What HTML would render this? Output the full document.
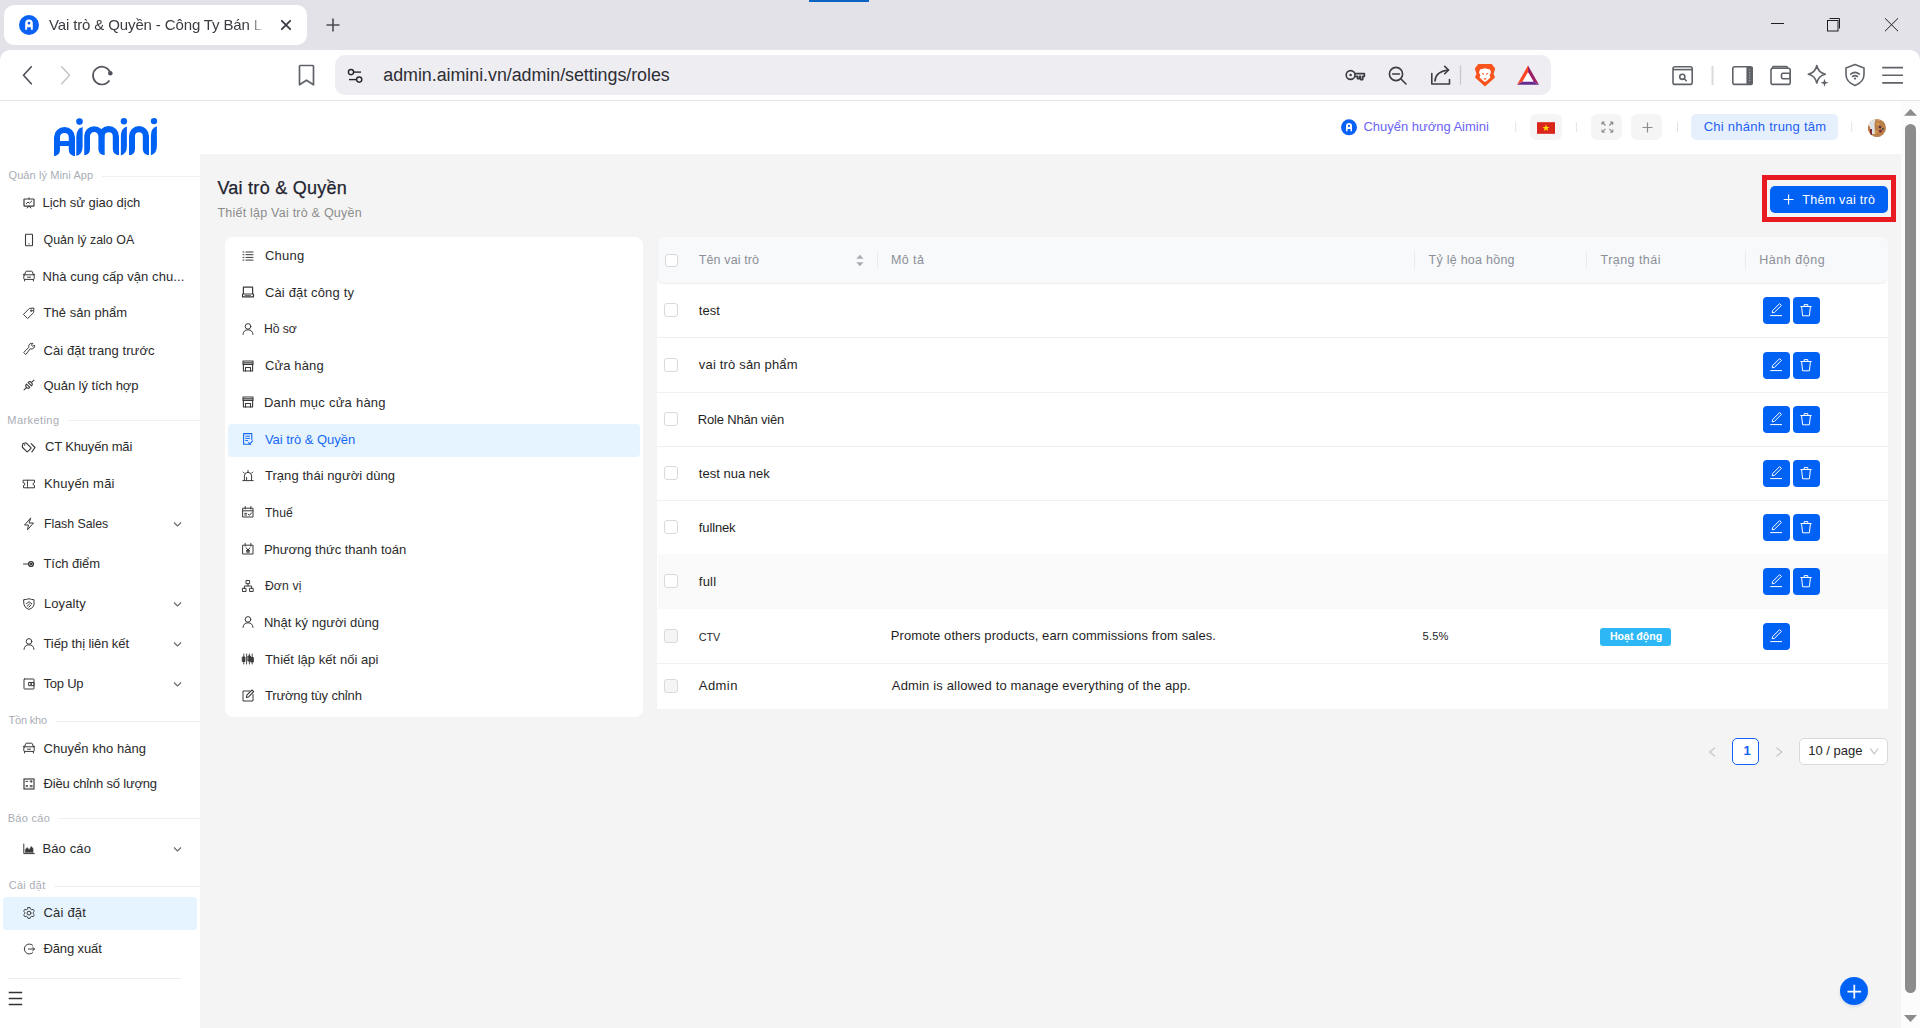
<!DOCTYPE html>
<html><head><meta charset="utf-8"><title>Vai trò &amp; Quyền</title>
<style>
*{box-sizing:border-box;margin:0;padding:0}
html,body{width:1920px;height:1028px;overflow:hidden;background:#e3e2e8;font-family:"Liberation Sans",sans-serif}
.a{position:absolute}
.t{position:absolute;white-space:nowrap;font-family:"Liberation Sans",sans-serif}
svg{position:absolute;overflow:visible}
</style></head><body>
<!-- tab strip -->
<div class="a" style="left:809px;top:0;width:60px;height:2px;background:#0b63c4"></div>
<div class="a" style="left:4px;top:5px;width:303px;height:40px;background:#fff;border-radius:10px"></div>
<svg style="left:0;top:0" width="1920" height="100" viewBox="0 0 1920 100">
 <!-- favicon -->
 <circle cx="29" cy="25" r="10" fill="#0a62f5"/>
 <path fill="#fff" fill-rule="evenodd" d="M25.2 29.8V23.3A3.8 3.8 0 0 1 32.8 23.3V29.8H30.9V27.2H27.1V29.8Z M29 21.8A1.4 1.4 0 1 0 29 24.6A1.4 1.4 0 1 0 29 21.8Z"/>
 <!-- tab close -->
 <path d="M281.8 20.8L290.2 29.2M290.2 20.8L281.8 29.2" stroke="#3c3c44" stroke-width="1.8" stroke-linecap="round"/>
 <path d="M333 18.5V31.5M326.5 25H339.5" stroke="#4b4b52" stroke-width="1.6"/>
 <!-- window controls -->
 <path d="M1771 23.5H1784" stroke="#1f1f1f" stroke-width="1"/>
 <rect x="1827.5" y="20.5" width="10.5" height="10.5" fill="none" stroke="#1f1f1f" stroke-width="1"/>
 <path d="M1829.5 18.5H1839.5V28.5" fill="none" stroke="#1f1f1f" stroke-width="1"/>
 <path d="M1885 18.3L1898 31.2M1898 18.3L1885 31.2" stroke="#1f1f1f" stroke-width="1"/>
</svg>
<!-- toolbar -->
<div class="a" style="left:0;top:50px;width:1920px;height:50px;background:#fff;border-radius:10px 10px 0 0"></div>
<div class="a" style="left:0;top:100px;width:1920px;height:1px;background:#e4e3e8"></div>
<div class="a" style="left:335px;top:55px;width:1216px;height:40px;background:#ededf2;border-radius:10px"></div>
<svg style="left:0;top:0" width="1920" height="100" viewBox="0 0 1920 100">
 <path d="M31.3 66.8L23.5 75.3L31.3 83.8" fill="none" stroke="#50535a" stroke-width="1.7" stroke-linecap="round" stroke-linejoin="round"/>
 <path d="M61.7 66.8L69.5 75.3L61.7 83.8" fill="none" stroke="#c4c4c8" stroke-width="1.5" stroke-linecap="round" stroke-linejoin="round"/>
 <path d="M109 81A8.9 8.9 0 1 1 109.8 71.5" fill="none" stroke="#50535a" stroke-width="1.7" stroke-linecap="round"/>
 <circle cx="110.3" cy="73.3" r="2.3" fill="#50535a"/>
 <path d="M300.3 65.5H312.7Q313.5 65.5 313.5 66.3V84.8L306.5 80.2L299.5 84.8V66.3Q299.5 65.5 300.3 65.5Z" fill="none" stroke="#5f6368" stroke-width="1.7" stroke-linejoin="round"/>
 <!-- tune -->
 <g fill="none" stroke="#27272b" stroke-width="1.4">
  <circle cx="351" cy="72.1" r="2.6"/><path d="M353.8 72.1H361"/>
  <circle cx="359.2" cy="79.6" r="2.6"/><path d="M349 79.6H356.4"/>
 </g>
 <!-- key -->
 <g fill="none" stroke="#3c3c44" stroke-width="1.6" stroke-linejoin="round">
  <circle cx="1350.6" cy="75" r="4.4"/>
  <path d="M1355 73.6H1364.4V76.4H1362.8V79.6H1360.6V76.4H1359.4V78.6H1357.4V76.4H1355"/>
 </g>
 <circle cx="1350.6" cy="75" r="1.3" fill="#3c3c44"/>
 <!-- zoom out -->
 <g fill="none" stroke="#3c3c44" stroke-width="1.6" stroke-linecap="round">
  <circle cx="1396" cy="74" r="6.6"/><path d="M1401 79L1406 84M1392.6 74H1399.4"/>
 </g>
 <!-- share -->
 <g fill="none" stroke="#3c3c44" stroke-width="1.6" stroke-linecap="round" stroke-linejoin="round">
  <path d="M1431.8 73.5V84H1449.5V79.5"/>
  <path d="M1435 81Q1435.5 71.5 1448.3 70"/>
  <path d="M1444.7 66.3L1448.6 70L1444.7 73.8"/>
 </g>
 <path d="M1460.5 65.5V84.8" stroke="#c9c9cd" stroke-width="1.3"/>
 <!-- brave -->
 <path d="M1478.3 64H1491.7L1495.2 68.6L1493.6 73.8L1495 77.6L1485 86.5L1475 77.6L1476.4 73.8L1474.8 68.6Z" fill="#f9531e"/>
 <path d="M1480 69.5L1485 68.3L1490 69.5L1491 72.5L1489.6 75.3L1490.5 77.2L1487.5 80.3L1485 82L1482.5 80.3L1479.5 77.2L1480.4 75.3L1479 72.5Z" fill="#fff"/>
 <path d="M1481.5 72.7L1484 73.7L1483.3 75.2ZM1488.5 72.7L1486 73.7L1486.7 75.2ZM1483.3 78.3H1486.7L1485 80Z" fill="#f9531e"/>
 <!-- BAT -->
 <path d="M1528 65.6L1517 84.7L1522.6 81.6L1528 72.2Z" fill="#ff4724"/>
 <path d="M1528 65.6L1539 84.7L1533.4 81.6L1528 72.2Z" fill="#9e1f63"/>
 <path d="M1517 84.7H1539L1533.4 81.6H1522.6Z" fill="#662d91"/>
 <path d="M1528 72.2L1522.6 81.6H1533.4Z" fill="#fff"/>
 <!-- right toolbar -->
 <g fill="none" stroke="#5f6368" stroke-width="1.6" stroke-linejoin="round">
  <rect x="1673" y="66.8" width="19.2" height="17.6" rx="2"/>
  <path d="M1673 69.6H1692.2"/>
  <circle cx="1682.3" cy="76.8" r="2.6"/><path d="M1684.3 78.8L1686.3 80.8" stroke-linecap="round"/>
  <rect x="1732.8" y="66.8" width="19.4" height="17.6" rx="2"/>
  <rect x="1771" y="68.3" width="19.2" height="16.1" rx="2"/>
  <path d="M1772.5 68.2V67.8Q1772.5 66.6 1773.7 66.6H1786.2Q1787.4 66.6 1787.6 68"/>
  <rect x="1781.5" y="73.2" width="8.7" height="5.6" rx="1.6"/>
  <path d="M1816.8 65.5Q1818.2 72.5 1825.3 74.2Q1818.2 75.9 1816.8 83Q1815.4 75.9 1808.3 74.2Q1815.4 72.5 1816.8 65.5Z"/>
  <path d="M1855 64.6L1864 67.9V74.6Q1864 82.2 1855 85.4Q1846 82.2 1846 74.6V67.9Z"/>
  <path d="M1850.7 74.1Q1855 70.6 1859.3 74.1M1852.6 76.5Q1855 74.7 1857.4 76.5" stroke-linecap="round"/>
  <path d="M1882.2 67.6H1903M1882.2 75.3H1903M1882.2 82.9H1903"/>
 </g>
 <path d="M1712.5 66V85" stroke="#dadade" stroke-width="2"/>
 <rect x="1746.4" y="66.8" width="6.6" height="17.6" fill="#5f6368" rx="1"/>
 <path d="M1749.7 69.5V82" stroke="#c8c9cc" stroke-width="0.9" stroke-dasharray="1 1.6"/>
 <path d="M1824.5 78.8L1825.5 81.8L1828.5 82.8L1825.5 83.8L1824.5 86.8L1823.5 83.8L1820.5 82.8L1823.5 81.8Z" fill="#5f6368"/>
 <circle cx="1855" cy="78.6" r="1.1" fill="#5f6368"/>
</svg>

<div class="a" style="left:0px;top:101px;width:1901px;height:927px;background:#fff;"></div>
<div class="a" style="left:200px;top:154px;width:1701px;height:874px;background:#f4f4f4;"></div>
<div class="a" style="left:1901px;top:101px;width:19px;height:927px;background:#fcfcfc;"></div>
<div class="a" style="left:1905px;top:124px;width:11px;height:869px;background:#8c8c8c;border-radius:5.5px"></div>
<svg style="left:1900px;top:100px" width="20" height="928" viewBox="1900 100 20 928"><path d="M1904 115.8H1917L1910.5 109Z" fill="#8c8c8c"/><path d="M1904 1015H1917L1910.5 1022Z" fill="#8c8c8c"/></svg>
<svg style="left:40px;top:110px" width="130" height="55" viewBox="40 110 130 55"><g fill="#0062f5">
<path fill-rule="evenodd" d="M54 156V137.5A10.5 10.5 0 0 1 75 137.5V156H73.8Q68.75 154.5 68.75 149.5V146.1H60V149.5Q60 154.5 55.2 156Z M60 141V137.2A4.38 4.38 0 0 1 68.75 137.2V141Z"/>
<path d="M82.6 127V146.5Q82.6 154.5 76.3 156V137Q76.3 128.5 82.6 127Z"/>
<path d="M126.9 126.5V146Q126.9 154 120.9 155.5V136.5Q120.9 128 126.9 126.5Z"/>
<path d="M156.9 126.3V145.8Q156.9 153.8 150.9 155.3V136.3Q150.9 127.8 156.9 126.3Z"/>
<circle cx="79.5" cy="121.6" r="3.3"/><circle cx="123.9" cy="121.3" r="3.2"/><circle cx="154" cy="121.1" r="3.2"/>
<path d="M84.25 136.1A9.95 9.95 0 0 1 104.15 136.1H98.4A4.2 4.2 0 0 0 90 136.1Z"/>
<path d="M98.4 136.4A10.3 10.3 0 0 1 119 136.4H112.8A4.05 4.05 0 0 0 104.7 136.4Z"/>
<path d="M84.25 136H90V149Q90 154 85.6 155H84.25Z"/>
<path d="M98.4 136H104.7V155H103.4Q98.4 154 98.4 149Z"/>
<path d="M112.8 136H119V155H117.7Q112.8 154 112.8 149Z"/>
<path d="M129 136.1A10 10 0 0 1 149 136.1H142.8A3.9 3.9 0 0 0 135 136.1Z"/>
<path d="M129 136H135V149Q135 154 130.6 155H129Z"/>
<path d="M142.8 136H149V155H147.7Q142.8 154 142.8 149Z"/>
</g></svg>
<svg style="left:1330px;top:105px" width="570" height="45" viewBox="1330 105 570 45"><circle cx="1349" cy="127.3" r="8" fill="#0a62f5"/><path fill="#fff" fill-rule="evenodd" d="M1346 131.2V126A3 3 0 0 1 1352 126V131.2H1350.5V129.1H1347.5V131.2Z M1349 124.8A1.1 1.1 0 1 0 1349 127A1.1 1.1 0 1 0 1349 124.8Z"/><path d="M1515.7 122V132M1576.4 122V132M1677.5 122V132M1851.7 122V132" stroke="#e3e3e3" stroke-width="1"/></svg>
<div class="a" style="left:1530px;top:114px;width:32px;height:26px;background:#f5f5f5;border-radius:6px"></div>
<div class="a" style="left:1591px;top:114px;width:31px;height:26px;background:#f5f5f5;border-radius:6px"></div>
<div class="a" style="left:1631px;top:114px;width:31px;height:26px;background:#f5f5f5;border-radius:6px"></div>
<div class="a" style="left:1691px;top:114px;width:147px;height:26px;background:#e6f0fd;border-radius:5px"></div>
<svg style="left:1530px;top:105px" width="370" height="45" viewBox="1530 105 370 45"><rect x="1537" y="122.2" width="18" height="11.6" fill="#da251d"/><path d="M1546 124.3L1546.85 126.9H1549.6L1547.4 128.5L1548.2 131.1L1546 129.5L1543.8 131.1L1544.6 128.5L1542.4 126.9H1545.15Z" fill="#ffde00"/><g fill="none" stroke="#8c8c8c" stroke-width="1.1"><path d="M1602 122L1605.5 125.5M1602 122H1604.8M1602 122V124.8"/><path d="M1612.8 122L1609.3 125.5M1612.8 122H1610M1612.8 122V124.8"/><path d="M1602 132.3L1605.5 128.8M1602 132.3H1604.8M1602 132.3V129.5"/><path d="M1612.8 132.3L1609.3 128.8M1612.8 132.3H1610M1612.8 132.3V129.5"/><path d="M1647.5 122.5V132.5M1642.5 127.5H1652.5" stroke-width="1.2"/></g><defs><clipPath id="avc"><circle cx="1877" cy="127.9" r="9"/></clipPath></defs><g clip-path="url(#avc)"><rect x="1867" y="118" width="20" height="20" fill="#b9804a"/><path d="M1869 119H1875.5L1874.5 124L1875 134H1869Z" fill="#dfe2e5"/><path d="M1867 126Q1869 125 1870 127V137H1867Z" fill="#c0703a"/><path d="M1870 129V136H1872V129Z" fill="#7a2a35"/><path d="M1867 134Q1877 140 1887 134V138H1867Z" fill="#23252b"/><circle cx="1880" cy="127" r="1.3" fill="#5a3040"/><circle cx="1880.5" cy="131" r="1.5" fill="#7a2a3a"/><circle cx="1883" cy="129" r="1" fill="#4a4050"/><path d="M1876 120L1879 118.5L1880 121Z" fill="#e0a070"/><circle cx="1878" cy="124" r="1.6" fill="#e0a050" opacity="0.8"/><circle cx="1876" cy="132" r="1.6" fill="#e0a050" opacity="0.8"/></g></svg>
<div class="a" style="left:102px;top:176px;width:98px;height:1px;background:#f0f0f0;"></div>
<div class="a" style="left:68px;top:420px;width:132px;height:1px;background:#f0f0f0;"></div>
<div class="a" style="left:56px;top:721px;width:144px;height:1px;background:#f0f0f0;"></div>
<div class="a" style="left:58px;top:818px;width:142px;height:1px;background:#f0f0f0;"></div>
<div class="a" style="left:54px;top:886px;width:146px;height:1px;background:#f0f0f0;"></div>
<div class="a" style="left:8px;top:978px;width:173px;height:1px;background:#ececec;"></div>
<svg style="left:0;top:985px" width="30" height="30" viewBox="0 985 30 30"><path d="M8.7 992.5H22.2M8.7 998.5H22.2M8.7 1004.5H22.2" stroke="#333" stroke-width="1.3"/></svg>
<div class="a" style="left:3px;top:897px;width:194px;height:33px;background:#e6f4ff;border-radius:4px"></div>
<svg style="left:21.8px;top:195.70000000000002px" width="14" height="14" viewBox="-7.0 -7.0 14 14"><g fill="none" stroke="#3a3a3a" stroke-width="1" stroke-linecap="round" stroke-linejoin="round"><rect x="-5" y="-4" width="10" height="7.2" rx="0.6" stroke-width="1.2"/><path d="M-2.8 0.8L-1 -1L0.5 0.2L2.8 -2"/><path d="M0 -4V-5.2M0 3.2L-2 5M0 3.2L2 5"/></g></svg>
<svg style="left:21.8px;top:232.70000000000002px" width="14" height="14" viewBox="-7.0 -7.0 14 14"><g fill="none" stroke="#3a3a3a" stroke-width="1" stroke-linecap="round" stroke-linejoin="round"><rect x="-3.5" y="-5.7" width="7" height="11.4" rx="0.8" stroke-width="1.1"/><path d="M-0.3 3.9H0.3" stroke-width="0.8"/></g></svg>
<svg style="left:21.8px;top:269.40000000000003px" width="14" height="14" viewBox="-7.0 -7.0 14 14"><g fill="none" stroke="#3a3a3a" stroke-width="1" stroke-linecap="round" stroke-linejoin="round"><path d="M-4.3 -1.2L-3.4 -4.2Q-3.2 -4.8 -2.6 -4.8H2.6Q3.2 -4.8 3.4 -4.2L4.3 -1.2"/><rect x="-5.2" y="-1.2" width="10.4" height="4.6" rx="0.7"/><path d="M-4.4 3.4V5M4.4 3.4V5M-5.6 -1.6H-4.8M4.8 -1.6H5.6M-1.5 1.2H1.5"/></g></svg>
<svg style="left:21.8px;top:306.2px" width="14" height="14" viewBox="-7.0 -7.0 14 14"><g fill="none" stroke="#3a3a3a" stroke-width="1" stroke-linecap="round" stroke-linejoin="round"><path d="M-5.3 1.1L0.4 -4.6L4.9 -4.9L4.6 -0.4L-1.1 5.3Z"/><circle cx="2.3" cy="-2.3" r="0.8"/></g></svg>
<svg style="left:21.8px;top:342.0px" width="14" height="14" viewBox="-7.0 -7.0 14 14"><g fill="none" stroke="#3a3a3a" stroke-width="1" stroke-linecap="round" stroke-linejoin="round"><path d="M-3.5 5.3L-5.3 3.5L-0.1 -1.7A3 3 0 0 1 3.9 -5.5L2.4 -4L3.9 -2.5L5.4 -4A3 3 0 0 1 1.6 -0.1Z" stroke-width="1"/></g></svg>
<svg style="left:21.8px;top:378.4px" width="14" height="14" viewBox="-7.0 -7.0 14 14"><g fill="none" stroke="#3a3a3a" stroke-width="1" stroke-linecap="round" stroke-linejoin="round"><g transform="rotate(-45)"><path d="M-1.1 -2.4V2.4A2.4 2.4 0 0 1 -1.1 -2.4Z M1.1 -2.4V2.4A2.4 2.4 0 0 0 1.1 -2.4Z M-3.5 0H-7 M3.5 0H7" stroke-width="1.05"/></g></g></svg>
<svg style="left:22.3px;top:439.8px" width="14" height="14" viewBox="-7.0 -7.0 14 14"><g fill="none" stroke="#3a3a3a" stroke-width="1" stroke-linecap="round" stroke-linejoin="round"><path d="M-6.2 -3.3L-3.6 -4.1Q-3 -4.3 -2.6 -3.9L1.9 0.6Q2.3 1 1.9 1.4L-1.4 4.7Q-1.8 5.1 -2.2 4.7L-6.4 0.5Q-6.8 0.1 -6.7 -0.5Z" stroke-width="1.15"/><circle cx="-4.3" cy="-2.1" r="0.75" fill="#3a3a3a" stroke="none"/><path d="M2.1 -3.4L6 0.5L2.9 4.8" stroke-width="1.15"/></g></svg>
<svg style="left:22.3px;top:476.6px" width="14" height="14" viewBox="-7.0 -7.0 14 14"><g fill="none" stroke="#3a3a3a" stroke-width="1" stroke-linecap="round" stroke-linejoin="round"><path d="M-5.5 -3.8H5.5V-1.3A1.4 1.4 0 0 0 5.5 1.5V3.8H-5.5V1.5A1.4 1.4 0 0 0 -5.5 -1.3Z"/><path d="M-1.5 -3.8V3.8" stroke-dasharray="1.2 1"/></g></svg>
<svg style="left:22.3px;top:516.5999999999999px" width="14" height="14" viewBox="-7.0 -7.0 14 14"><g fill="none" stroke="#3a3a3a" stroke-width="1" stroke-linecap="round" stroke-linejoin="round"><path d="M1.5 -5.8L-4.5 1H-0.5L-1.5 5.8L4.5 -1H0.5Z"/></g></svg>
<svg style="left:21.8px;top:556.6999999999999px" width="14" height="14" viewBox="-7.0 -7.0 14 14"><g fill="none" stroke="#3a3a3a" stroke-width="1" stroke-linecap="round" stroke-linejoin="round"><circle cx="2" cy="0" r="2.4" stroke-width="1.4"/><path d="M-5.5 0H-0.5"/><circle cx="2" cy="0" r="0.9" fill="#3a3a3a"/></g></svg>
<svg style="left:22.3px;top:597.1999999999999px" width="14" height="14" viewBox="-7.0 -7.0 14 14"><g fill="none" stroke="#3a3a3a" stroke-width="1" stroke-linecap="round" stroke-linejoin="round"><path d="M-5 -4.3Q-2.5 -4.3 0 -5.3Q2.5 -4.3 5 -4.3V0.8Q4.5 4 0 5.5Q-4.5 4 -5 0.8Z"/><path d="M-2.6 -0.3L0.2 -2.3L2.8 -0.2M-1.8 2.2L0.6 -0.1M-0.2 3.2L2 1"/></g></svg>
<svg style="left:21.8px;top:636.8px" width="14" height="14" viewBox="-7.0 -7.0 14 14"><g fill="none" stroke="#3a3a3a" stroke-width="1" stroke-linecap="round" stroke-linejoin="round"><circle cx="0" cy="-2.6" r="2.8"/><path d="M-5 5.4Q-4.6 0.8 0 0.8Q4.6 0.8 5 5.4"/></g></svg>
<svg style="left:21.8px;top:676.8px" width="14" height="14" viewBox="-7.0 -7.0 14 14"><g fill="none" stroke="#3a3a3a" stroke-width="1" stroke-linecap="round" stroke-linejoin="round"><rect x="-5" y="-5" width="10" height="10" rx="0.5"/><path d="M0 -1.5H5V1.7H0Z"/><circle cx="2" cy="0.1" r="0.5" fill="#3a3a3a"/></g></svg>
<svg style="left:21.8px;top:741.3px" width="14" height="14" viewBox="-7.0 -7.0 14 14"><g fill="none" stroke="#3a3a3a" stroke-width="1" stroke-linecap="round" stroke-linejoin="round"><path d="M-4.3 -1.2L-3.4 -4.2Q-3.2 -4.8 -2.6 -4.8H2.6Q3.2 -4.8 3.4 -4.2L4.3 -1.2"/><rect x="-5.2" y="-1.2" width="10.4" height="4.6" rx="0.7"/><path d="M-4.4 3.4V5M4.4 3.4V5M-5.6 -1.6H-4.8M4.8 -1.6H5.6M-1.5 1.2H1.5"/></g></svg>
<svg style="left:21.8px;top:776.8px" width="14" height="14" viewBox="-7.0 -7.0 14 14"><g fill="none" stroke="#3a3a3a" stroke-width="1" stroke-linecap="round" stroke-linejoin="round"><rect x="-5" y="-5" width="10" height="10" stroke-width="1.15" stroke-linejoin="miter"/><path d="M-3.2 -2.6H-1.2M2.2 -3.6V-1.6M1.2 -2.6H3.2M-3 1.3L-1.4 2.9M-1.4 1.3L-3 2.9M1.2 1.6H3.2M1.2 2.8H3.2" stroke-width="0.9"/></g></svg>
<svg style="left:21.8px;top:841.6999999999999px" width="14" height="14" viewBox="-7.0 -7.0 14 14"><g fill="none" stroke="#3a3a3a" stroke-width="1" stroke-linecap="round" stroke-linejoin="round"><path d="M-5.2 -5V4.6H5.4"/><path d="M-3.6 3.6V0.5L-1.8 -1.5L0.2 1L2.2 -2.5L4 -0.5V3.6Z" fill="#3a3a3a" stroke-width="0.6"/></g></svg>
<svg style="left:21.8px;top:905.9px" width="14" height="14" viewBox="-7.0 -7.0 14 14"><g fill="none" stroke="#3a3a3a" stroke-width="1" stroke-linecap="round" stroke-linejoin="round"><path d="M-1.2 -5.5H1.2L1.6 -3.9L3 -3.1L4.6 -3.6L5.8 -1.5L4.6 -0.4V1.2L5.8 2.3L4.6 4.4L3 3.9L1.6 4.7L1.2 6.2H-1.2L-1.6 4.7L-3 3.9L-4.6 4.4L-5.8 2.3L-4.6 1.2V-0.4L-5.8 -1.5L-4.6 -3.6L-3 -3.1L-1.6 -3.9Z" transform="translate(0 -0.35) scale(0.92)"/><circle cx="0" cy="0.1" r="1.9"/></g></svg>
<svg style="left:21.8px;top:942.0999999999999px" width="14" height="14" viewBox="-7.0 -7.0 14 14"><g fill="none" stroke="#3a3a3a" stroke-width="1" stroke-linecap="round" stroke-linejoin="round"><path d="M3.6 -3.8A5 5 0 1 0 3.6 3.8"/><path d="M-0.5 0H5.5M3.6 -1.8L5.5 0L3.6 1.8"/></g></svg>
<svg style="left:170px;top:517.8px" width="14" height="12" viewBox="0 0 14 12"><path d="M4 4.5L7.5 8L11 4.5" fill="none" stroke="#666" stroke-width="1.1"/></svg>
<svg style="left:170px;top:598.4px" width="14" height="12" viewBox="0 0 14 12"><path d="M4 4.5L7.5 8L11 4.5" fill="none" stroke="#666" stroke-width="1.1"/></svg>
<svg style="left:170px;top:638px" width="14" height="12" viewBox="0 0 14 12"><path d="M4 4.5L7.5 8L11 4.5" fill="none" stroke="#666" stroke-width="1.1"/></svg>
<svg style="left:170px;top:678px" width="14" height="12" viewBox="0 0 14 12"><path d="M4 4.5L7.5 8L11 4.5" fill="none" stroke="#666" stroke-width="1.1"/></svg>
<svg style="left:170px;top:842.9px" width="14" height="12" viewBox="0 0 14 12"><path d="M4 4.5L7.5 8L11 4.5" fill="none" stroke="#666" stroke-width="1.1"/></svg>
<div class="a" style="left:225px;top:237px;width:418px;height:480px;background:#fff;border-radius:8px"></div>
<div class="a" style="left:228px;top:424px;width:412px;height:33px;background:#e6f4ff;border-radius:4px"></div>
<svg style="left:241.0px;top:248.50000000000003px" width="14" height="14" viewBox="-7.0 -7.0 14 14"><g fill="none" stroke="#3a3a3a" stroke-width="1" stroke-linecap="round" stroke-linejoin="round"><path d="M-2 -4H5M-2 -1.3H5M-2 1.4H5M-2 4.1H5" stroke-width="1"/><path d="M-5 -4H-4M-5 -1.3H-4M-5 1.4H-4M-5 4.1H-4" stroke-width="1"/></g></svg>
<svg style="left:241.0px;top:285.17px" width="14" height="14" viewBox="-7.0 -7.0 14 14"><g fill="none" stroke="#3a3a3a" stroke-width="1" stroke-linecap="round" stroke-linejoin="round"><rect x="-4.6" y="-4.8" width="9.2" height="6.8" stroke-width="1.2"/><path d="M-5.5 2.2V4.8H5.5V2.2" stroke-width="1.2"/><path d="M-3 3.6H3" stroke-width="0.8" stroke-dasharray="1.5 0.5"/></g></svg>
<svg style="left:241.0px;top:321.84000000000003px" width="14" height="14" viewBox="-7.0 -7.0 14 14"><g fill="none" stroke="#3a3a3a" stroke-width="1" stroke-linecap="round" stroke-linejoin="round"><circle cx="0" cy="-2.6" r="2.8"/><path d="M-5 5.4Q-4.6 0.8 0 0.8Q4.6 0.8 5 5.4"/></g></svg>
<svg style="left:241.0px;top:358.51px" width="14" height="14" viewBox="-7.0 -7.0 14 14"><g fill="none" stroke="#3a3a3a" stroke-width="1" stroke-linecap="round" stroke-linejoin="round"><path d="M-5 -5H5V-1.6H-5Z M-5 -3.2H5" stroke-width="1.1"/><path d="M-4.6 -1.6V5H4.6V-1.6" stroke-width="1.1"/><path d="M-2.5 5V1.5H2.5V5" stroke-width="1.1"/></g></svg>
<svg style="left:241.0px;top:395.18px" width="14" height="14" viewBox="-7.0 -7.0 14 14"><g fill="none" stroke="#3a3a3a" stroke-width="1" stroke-linecap="round" stroke-linejoin="round"><path d="M-5 -5H5V-1.6H-5Z M-5 -3.2H5" stroke-width="1.1"/><path d="M-4.6 -1.6V5H4.6V-1.6" stroke-width="1.1"/><path d="M-2.5 5V1.5H2.5V5" stroke-width="1.1"/></g></svg>
<svg style="left:241.0px;top:431.85px" width="14" height="14" viewBox="-7.0 -7.0 14 14"><g fill="none" stroke="#1668f5" stroke-width="1" stroke-linecap="round" stroke-linejoin="round"><path d="M2.8 5.2H-4.4V-5.4H3.8V0.6" stroke-width="1.1"/><path d="M-2.4 -2.8H1.6M-2.4 -0.6H1.6M-2.4 1.6H-0.2" stroke-width="1"/><path d="M0.6 3.6L1.8 4.8L4.6 1.8" stroke-width="1.1"/></g></svg>
<svg style="left:241.0px;top:468.52px" width="14" height="14" viewBox="-7.0 -7.0 14 14"><g fill="none" stroke="#3a3a3a" stroke-width="1" stroke-linecap="round" stroke-linejoin="round"><path d="M-3.6 4.2V0Q-3.6 -3.6 0 -3.6Q3.6 -3.6 3.6 0V4.2"/><path d="M-5.2 4.6H5.2M0 -3.6V-5.5M-4.8 -4L-3.6 -2.8M4.8 -4L3.6 -2.8M-1.4 4.2V1.4"/></g></svg>
<svg style="left:241.0px;top:505.18999999999994px" width="14" height="14" viewBox="-7.0 -7.0 14 14"><g fill="none" stroke="#3a3a3a" stroke-width="1" stroke-linecap="round" stroke-linejoin="round"><rect x="-5" y="-3.8" width="10" height="8.8"/><path d="M-5 -1.2H5M-2.8 -5.5V-3M2.8 -5.5V-3M-3.3 1.4H-1.5M-3.3 3H-1.5M0.2 2.2L1.4 3.3L3.6 0.8"/></g></svg>
<svg style="left:241.0px;top:541.86px" width="14" height="14" viewBox="-7.0 -7.0 14 14"><g fill="none" stroke="#3a3a3a" stroke-width="1" stroke-linecap="round" stroke-linejoin="round"><rect x="-5" y="-3.8" width="10" height="8.8"/><path d="M-2.8 -5.5V-3M2.8 -5.5V-3M-1.8 -1.2L0 1.2L1.8 -1.2M0 1.2V3.8M-1.6 1.6H1.6M-1.6 2.9H1.6"/></g></svg>
<svg style="left:241.0px;top:578.5300000000001px" width="14" height="14" viewBox="-7.0 -7.0 14 14"><g fill="none" stroke="#3a3a3a" stroke-width="1" stroke-linecap="round" stroke-linejoin="round"><rect x="-1.6" y="-5.5" width="3.2" height="3.2"/><rect x="-5.2" y="2.3" width="3.2" height="3.2"/><rect x="2" y="2.3" width="3.2" height="3.2"/><path d="M0 -2.3V0M-3.6 2.3V0H3.6V2.3"/></g></svg>
<svg style="left:241.0px;top:615.2px" width="14" height="14" viewBox="-7.0 -7.0 14 14"><g fill="none" stroke="#3a3a3a" stroke-width="1" stroke-linecap="round" stroke-linejoin="round"><circle cx="0" cy="-2.6" r="2.8"/><path d="M-5 5.4Q-4.6 0.8 0 0.8Q4.6 0.8 5 5.4"/></g></svg>
<svg style="left:241.0px;top:651.87px" width="14" height="14" viewBox="-7.0 -7.0 14 14"><g fill="none" stroke="#3a3a3a" stroke-width="1" stroke-linecap="round" stroke-linejoin="round"><path d="M-4.2 -5V5M-1.4 -5V5M1.4 -5V5M4.2 -5V5" stroke-width="0.9"/><rect x="-5.3" y="-2" width="2.2" height="4.5" fill="#3a3a3a"/><rect x="0.3" y="-3" width="2.2" height="5" fill="#3a3a3a"/><rect x="3.1" y="-1.5" width="2.2" height="4.5" fill="#3a3a3a"/></g></svg>
<svg style="left:241.0px;top:688.5400000000001px" width="14" height="14" viewBox="-7.0 -7.0 14 14"><g fill="none" stroke="#3a3a3a" stroke-width="1" stroke-linecap="round" stroke-linejoin="round"><path d="M1.5 -5H-5V5H5V-1.5"/><path d="M-1.5 1.6L-1.2 -0.8L4 -6L5.7 -4.3L0.6 0.9Z" stroke-width="1.1"/></g></svg>
<div class="a" style="left:657px;top:237px;width:1231px;height:472px;background:#fff;border-radius:8px 8px 0 0"></div>
<div class="a" style="left:657px;top:237px;width:1231px;height:47px;background:#f8f9fa;border-radius:6px;border-bottom:1px solid #efefef;box-shadow:inset 1px 0 0 #f0f1f4"></div>
<div class="a" style="left:658px;top:554px;width:1230px;height:55px;background:#fafafa;"></div>
<div class="a" style="left:657px;top:337px;width:1231px;height:1px;background:#f0f0f0;"></div>
<div class="a" style="left:657px;top:392px;width:1231px;height:1px;background:#f0f0f0;"></div>
<div class="a" style="left:657px;top:446px;width:1231px;height:1px;background:#f0f0f0;"></div>
<div class="a" style="left:657px;top:500px;width:1231px;height:1px;background:#f0f0f0;"></div>
<div class="a" style="left:657px;top:663px;width:1231px;height:1px;background:#f0f0f0;"></div>
<div class="a" style="left:877px;top:251px;width:1px;height:18px;background:#ebebeb;"></div>
<div class="a" style="left:1414px;top:251px;width:1px;height:18px;background:#ebebeb;"></div>
<div class="a" style="left:1586px;top:251px;width:1px;height:18px;background:#ebebeb;"></div>
<div class="a" style="left:1745px;top:251px;width:1px;height:18px;background:#ebebeb;"></div>
<svg style="left:850px;top:250px" width="20" height="20" viewBox="850 250 20 20"><path d="M856.2 258.8H863.6L859.9 254.8Z M856.2 262.2H863.6L859.9 266.2Z" fill="#a9adb4"/></svg>
<div class="a" style="left:665px;top:254px;width:13px;height:13px;background:#fff;border:1px solid #d9d9d9;border-radius:3px"></div>
<div class="a" style="left:664px;top:303px;width:14px;height:14px;background:#fff;border:1px solid #d9d9d9;border-radius:3px"></div>
<div class="a" style="left:1763px;top:297px;width:27px;height:27px;background:#0062f5;border-radius:4px"></div>
<svg style="left:1763px;top:297px" width="27" height="27" viewBox="0 0 27 27"><g fill="none" stroke="#fff" stroke-width="1" stroke-linejoin="round"><path d="M9.2 15.8L9.6 13.6L16.6 6.6L18.4 8.4L11.4 15.4Z"/><path d="M7.2 18.6H19"/></g></svg>
<div class="a" style="left:1793px;top:297px;width:27px;height:27px;background:#0062f5;border-radius:4px"></div>
<svg style="left:1793px;top:297px" width="27" height="27" viewBox="0 0 27 27"><g fill="none" stroke="#fff" stroke-width="1" stroke-linejoin="round"><path d="M7.4 9.5H18.6M11.2 9.3V7.6H14.8V9.3M8.6 9.8L9.6 18.8H16.4L17.4 9.8"/></g></svg>
<div class="a" style="left:664px;top:358px;width:14px;height:14px;background:#fff;border:1px solid #d9d9d9;border-radius:3px"></div>
<div class="a" style="left:1763px;top:352px;width:27px;height:27px;background:#0062f5;border-radius:4px"></div>
<svg style="left:1763px;top:352px" width="27" height="27" viewBox="0 0 27 27"><g fill="none" stroke="#fff" stroke-width="1" stroke-linejoin="round"><path d="M9.2 15.8L9.6 13.6L16.6 6.6L18.4 8.4L11.4 15.4Z"/><path d="M7.2 18.6H19"/></g></svg>
<div class="a" style="left:1793px;top:352px;width:27px;height:27px;background:#0062f5;border-radius:4px"></div>
<svg style="left:1793px;top:352px" width="27" height="27" viewBox="0 0 27 27"><g fill="none" stroke="#fff" stroke-width="1" stroke-linejoin="round"><path d="M7.4 9.5H18.6M11.2 9.3V7.6H14.8V9.3M8.6 9.8L9.6 18.8H16.4L17.4 9.8"/></g></svg>
<div class="a" style="left:664px;top:412px;width:14px;height:14px;background:#fff;border:1px solid #d9d9d9;border-radius:3px"></div>
<div class="a" style="left:1763px;top:406px;width:27px;height:27px;background:#0062f5;border-radius:4px"></div>
<svg style="left:1763px;top:406px" width="27" height="27" viewBox="0 0 27 27"><g fill="none" stroke="#fff" stroke-width="1" stroke-linejoin="round"><path d="M9.2 15.8L9.6 13.6L16.6 6.6L18.4 8.4L11.4 15.4Z"/><path d="M7.2 18.6H19"/></g></svg>
<div class="a" style="left:1793px;top:406px;width:27px;height:27px;background:#0062f5;border-radius:4px"></div>
<svg style="left:1793px;top:406px" width="27" height="27" viewBox="0 0 27 27"><g fill="none" stroke="#fff" stroke-width="1" stroke-linejoin="round"><path d="M7.4 9.5H18.6M11.2 9.3V7.6H14.8V9.3M8.6 9.8L9.6 18.8H16.4L17.4 9.8"/></g></svg>
<div class="a" style="left:664px;top:466px;width:14px;height:14px;background:#fff;border:1px solid #d9d9d9;border-radius:3px"></div>
<div class="a" style="left:1763px;top:460px;width:27px;height:27px;background:#0062f5;border-radius:4px"></div>
<svg style="left:1763px;top:460px" width="27" height="27" viewBox="0 0 27 27"><g fill="none" stroke="#fff" stroke-width="1" stroke-linejoin="round"><path d="M9.2 15.8L9.6 13.6L16.6 6.6L18.4 8.4L11.4 15.4Z"/><path d="M7.2 18.6H19"/></g></svg>
<div class="a" style="left:1793px;top:460px;width:27px;height:27px;background:#0062f5;border-radius:4px"></div>
<svg style="left:1793px;top:460px" width="27" height="27" viewBox="0 0 27 27"><g fill="none" stroke="#fff" stroke-width="1" stroke-linejoin="round"><path d="M7.4 9.5H18.6M11.2 9.3V7.6H14.8V9.3M8.6 9.8L9.6 18.8H16.4L17.4 9.8"/></g></svg>
<div class="a" style="left:664px;top:520px;width:14px;height:14px;background:#fff;border:1px solid #d9d9d9;border-radius:3px"></div>
<div class="a" style="left:1763px;top:514px;width:27px;height:27px;background:#0062f5;border-radius:4px"></div>
<svg style="left:1763px;top:514px" width="27" height="27" viewBox="0 0 27 27"><g fill="none" stroke="#fff" stroke-width="1" stroke-linejoin="round"><path d="M9.2 15.8L9.6 13.6L16.6 6.6L18.4 8.4L11.4 15.4Z"/><path d="M7.2 18.6H19"/></g></svg>
<div class="a" style="left:1793px;top:514px;width:27px;height:27px;background:#0062f5;border-radius:4px"></div>
<svg style="left:1793px;top:514px" width="27" height="27" viewBox="0 0 27 27"><g fill="none" stroke="#fff" stroke-width="1" stroke-linejoin="round"><path d="M7.4 9.5H18.6M11.2 9.3V7.6H14.8V9.3M8.6 9.8L9.6 18.8H16.4L17.4 9.8"/></g></svg>
<div class="a" style="left:664px;top:574px;width:14px;height:14px;background:#fff;border:1px solid #d9d9d9;border-radius:3px"></div>
<div class="a" style="left:1763px;top:568px;width:27px;height:27px;background:#0062f5;border-radius:4px"></div>
<svg style="left:1763px;top:568px" width="27" height="27" viewBox="0 0 27 27"><g fill="none" stroke="#fff" stroke-width="1" stroke-linejoin="round"><path d="M9.2 15.8L9.6 13.6L16.6 6.6L18.4 8.4L11.4 15.4Z"/><path d="M7.2 18.6H19"/></g></svg>
<div class="a" style="left:1793px;top:568px;width:27px;height:27px;background:#0062f5;border-radius:4px"></div>
<svg style="left:1793px;top:568px" width="27" height="27" viewBox="0 0 27 27"><g fill="none" stroke="#fff" stroke-width="1" stroke-linejoin="round"><path d="M7.4 9.5H18.6M11.2 9.3V7.6H14.8V9.3M8.6 9.8L9.6 18.8H16.4L17.4 9.8"/></g></svg>
<div class="a" style="left:664px;top:629px;width:14px;height:14px;background:#f5f5f5;border:1px solid #d9d9d9;border-radius:3px"></div>
<div class="a" style="left:1763px;top:623px;width:27px;height:27px;background:#0062f5;border-radius:4px"></div>
<svg style="left:1763px;top:623px" width="27" height="27" viewBox="0 0 27 27"><g fill="none" stroke="#fff" stroke-width="1" stroke-linejoin="round"><path d="M9.2 15.8L9.6 13.6L16.6 6.6L18.4 8.4L11.4 15.4Z"/><path d="M7.2 18.6H19"/></g></svg>
<div class="a" style="left:664px;top:679px;width:14px;height:14px;background:#f5f5f5;border:1px solid #d9d9d9;border-radius:3px"></div>
<div class="a" style="left:1600px;top:628px;width:71px;height:18px;background:#2db7f5;border-radius:3px"></div>
<div class="a" style="left:1732px;top:738px;width:27px;height:27px;background:#fff;border:1px solid #1661f5;border-radius:5px"></div>
<div class="a" style="left:1799px;top:738px;width:89px;height:27px;background:#fff;border:1px solid #d9d9d9;border-radius:5px"></div>
<svg style="left:1700px;top:740px" width="190" height="24" viewBox="1700 740 190 24"><g fill="none" stroke="#bfbfbf" stroke-width="1.1"><path d="M1715 747.6L1709.6 752L1715 756.4"/><path d="M1776.4 747.6L1781.8 752L1776.4 756.4"/><path d="M1870.3 748.7L1874.2 753.9L1878 748.7"/></g></svg>
<div class="a" style="left:1762px;top:175px;width:134px;height:47px;background:transparent;border:5px solid #e81b23"></div>
<div class="a" style="left:1770px;top:186px;width:118px;height:27px;background:#0062f5;border-radius:5px"></div>
<svg style="left:1780px;top:192px" width="16" height="16" viewBox="1780 192 16 16"><path d="M1788.6 194.6V204.4M1783.7 199.5H1793.5" stroke="#fff" stroke-width="1.1"/></svg>
<div class="a" style="left:1840px;top:977px;width:28px;height:28px;background:#0062f5;border-radius:50%;box-shadow:0 2px 3px rgba(0,60,160,0.12)"></div>
<svg style="left:1840px;top:977px" width="28" height="28" viewBox="1840 977 28 28"><path d="M1854.3 984.8V998.4M1847.5 991.6H1861.1" stroke="#fff" stroke-width="1.7"/></svg>
<div class="t" style="left:49.0px;top:17.0px;font-size:15px;line-height:15px;letter-spacing:-0.13px;color:#3b3b42;font-weight:400;-webkit-mask-image:linear-gradient(90deg,#000 0,#000 200px,transparent 216px);padding-bottom:6px;">Vai trò &amp; Quyền - Công Ty Bán L</div>
<div class="t" style="left:383.3px;top:66.8px;font-size:17.86px;line-height:17.86px;letter-spacing:-0.04px;color:#2e2e34;font-weight:400;">admin.aimini.vn/admin/settings/roles</div>
<div class="t" style="left:1363.5px;top:120.0px;font-size:13px;line-height:13px;letter-spacing:-0.02px;color:#6b63f2;font-weight:400;">Chuyển hướng Aimini</div>
<div class="t" style="left:1703.7px;top:120.3px;font-size:13px;line-height:13px;letter-spacing:0.26px;color:#1f5ff3;font-weight:400;">Chi nhánh trung tâm</div>
<div class="t" style="left:8.5px;top:170.3px;font-size:11px;line-height:11px;letter-spacing:0.1px;color:#a9adb5;font-weight:400;">Quản lý Mini App</div>
<div class="t" style="left:42.5px;top:195.9px;font-size:13px;line-height:13px;letter-spacing:-0.03px;color:#2b2b2b;font-weight:400;">Lịch sử giao dịch</div>
<div class="t" style="left:43.5px;top:233.9px;font-size:12.38px;line-height:12.38px;letter-spacing:0.04px;color:#2b2b2b;font-weight:400;">Quản lý zalo OA</div>
<div class="t" style="left:42.5px;top:269.6px;font-size:13px;line-height:13px;letter-spacing:0.07px;color:#2b2b2b;font-weight:400;">Nhà cung cấp vận chu...</div>
<div class="t" style="left:43.5px;top:306.4px;font-size:13px;line-height:13px;letter-spacing:0.05px;color:#2b2b2b;font-weight:400;">Thẻ sản phẩm</div>
<div class="t" style="left:43.5px;top:343.6px;font-size:13px;line-height:13px;letter-spacing:0.07px;color:#2b2b2b;font-weight:400;">Cài đặt trang trước</div>
<div class="t" style="left:43.5px;top:379.2px;font-size:13px;line-height:13px;letter-spacing:-0.06px;color:#2b2b2b;font-weight:400;">Quản lý tích hợp</div>
<div class="t" style="left:45.0px;top:440.0px;font-size:13px;line-height:13px;letter-spacing:-0.17px;color:#2b2b2b;font-weight:400;">CT Khuyến mãi</div>
<div class="t" style="left:44.0px;top:476.8px;font-size:13px;line-height:13px;letter-spacing:0.2px;color:#2b2b2b;font-weight:400;">Khuyến mãi</div>
<div class="t" style="left:44.0px;top:517.8px;font-size:12.36px;line-height:12.36px;letter-spacing:-0.03px;color:#2b2b2b;font-weight:400;">Flash Sales</div>
<div class="t" style="left:43.5px;top:556.9px;font-size:13px;line-height:13px;letter-spacing:-0.07px;color:#2b2b2b;font-weight:400;">Tích điểm</div>
<div class="t" style="left:44.0px;top:597.4px;font-size:13px;line-height:13px;letter-spacing:0.08px;color:#2b2b2b;font-weight:400;">Loyalty</div>
<div class="t" style="left:43.5px;top:637.0px;font-size:13px;line-height:13px;letter-spacing:-0.09px;color:#2b2b2b;font-weight:400;">Tiếp thị liên kết</div>
<div class="t" style="left:43.5px;top:677.0px;font-size:13px;line-height:13px;letter-spacing:-0.22px;color:#2b2b2b;font-weight:400;">Top Up</div>
<div class="t" style="left:43.5px;top:741.5px;font-size:13px;line-height:13px;letter-spacing:0.04px;color:#2b2b2b;font-weight:400;">Chuyển kho hàng</div>
<div class="t" style="left:43.5px;top:777.0px;font-size:13px;line-height:13px;letter-spacing:-0.19px;color:#2b2b2b;font-weight:400;">Điều chỉnh số lượng</div>
<div class="t" style="left:42.4px;top:841.9px;font-size:13px;line-height:13px;letter-spacing:0.13px;color:#2b2b2b;font-weight:400;">Báo cáo</div>
<div class="t" style="left:43.4px;top:906.1px;font-size:13px;line-height:13px;letter-spacing:0.22px;color:#2b2b2b;font-weight:400;">Cài đặt</div>
<div class="t" style="left:43.4px;top:942.3px;font-size:13px;line-height:13px;letter-spacing:-0.1px;color:#2b2b2b;font-weight:400;">Đăng xuất</div>
<div class="t" style="left:7.3px;top:414.9px;font-size:11px;line-height:11px;letter-spacing:0.43px;color:#a9adb5;font-weight:400;">Marketing</div>
<div class="t" style="left:8.5px;top:715.2px;font-size:11px;line-height:11px;letter-spacing:-0.2px;color:#a9adb5;font-weight:400;">Tồn kho</div>
<div class="t" style="left:7.7px;top:813.2px;font-size:11px;line-height:11px;letter-spacing:0.3px;color:#a9adb5;font-weight:400;">Báo cáo</div>
<div class="t" style="left:8.7px;top:880.0px;font-size:11px;line-height:11px;letter-spacing:0.28px;color:#a9adb5;font-weight:400;">Cài đặt</div>
<div class="t" style="left:217.4px;top:179.0px;font-size:18px;line-height:18px;letter-spacing:0.26px;color:#1f2430;font-weight:400;-webkit-text-stroke:0.25px #1f2430;">Vai trò &amp; Quyền</div>
<div class="t" style="left:217.4px;top:207.0px;font-size:12.5px;line-height:12.5px;letter-spacing:0.23px;color:#8c8c8c;font-weight:400;">Thiết lập Vai trò &amp; Quyền</div>
<div class="t" style="left:1802.3px;top:194.0px;font-size:12.5px;line-height:12.5px;letter-spacing:0.28px;color:#ffffff;font-weight:400;">Thêm vai trò</div>
<div class="t" style="left:264.9px;top:249.1px;font-size:13px;line-height:13px;letter-spacing:0.28px;color:#2b2b2b;font-weight:400;">Chung</div>
<div class="t" style="left:264.9px;top:285.8px;font-size:13px;line-height:13px;letter-spacing:0.17px;color:#2b2b2b;font-weight:400;">Cài đặt công ty</div>
<div class="t" style="left:263.9px;top:323.4px;font-size:12.2px;line-height:12.2px;letter-spacing:-0.02px;color:#2b2b2b;font-weight:400;">Hồ sơ</div>
<div class="t" style="left:264.9px;top:359.1px;font-size:13px;line-height:13px;letter-spacing:0.13px;color:#2b2b2b;font-weight:400;">Cửa hàng</div>
<div class="t" style="left:263.9px;top:395.8px;font-size:13px;line-height:13px;letter-spacing:0.24px;color:#2b2b2b;font-weight:400;">Danh mục cửa hàng</div>
<div class="t" style="left:264.9px;top:432.5px;font-size:13px;line-height:13px;letter-spacing:-0.04px;color:#1668f5;font-weight:400;">Vai trò &amp; Quyền</div>
<div class="t" style="left:264.9px;top:469.1px;font-size:13px;line-height:13px;letter-spacing:0.07px;color:#2b2b2b;font-weight:400;">Trạng thái người dùng</div>
<div class="t" style="left:264.9px;top:506.8px;font-size:12.18px;line-height:12.18px;letter-spacing:0.03px;color:#2b2b2b;font-weight:400;">Thuế</div>
<div class="t" style="left:263.9px;top:542.5px;font-size:13px;line-height:13px;letter-spacing:0.0px;color:#2b2b2b;font-weight:400;">Phương thức thanh toán</div>
<div class="t" style="left:264.9px;top:580.1px;font-size:12.21px;line-height:12.21px;letter-spacing:0.14px;color:#2b2b2b;font-weight:400;">Đơn vị</div>
<div class="t" style="left:263.9px;top:615.8px;font-size:13px;line-height:13px;letter-spacing:0.02px;color:#2b2b2b;font-weight:400;">Nhật ký người dùng</div>
<div class="t" style="left:264.9px;top:652.5px;font-size:13px;line-height:13px;letter-spacing:0.04px;color:#2b2b2b;font-weight:400;">Thiết lập kết nối api</div>
<div class="t" style="left:264.9px;top:689.1px;font-size:13px;line-height:13px;letter-spacing:-0.14px;color:#2b2b2b;font-weight:400;">Trường tùy chỉnh</div>
<div class="t" style="left:698.8px;top:253.7px;font-size:12.5px;line-height:12.5px;letter-spacing:0.12px;color:#8a8f98;font-weight:400;">Tên vai trò</div>
<div class="t" style="left:890.9px;top:253.7px;font-size:12.5px;line-height:12.5px;letter-spacing:0.46px;color:#8a8f98;font-weight:400;">Mô tả</div>
<div class="t" style="left:1428.6px;top:253.7px;font-size:12.5px;line-height:12.5px;letter-spacing:0.25px;color:#8a8f98;font-weight:400;">Tỷ lệ hoa hồng</div>
<div class="t" style="left:1600.5px;top:253.7px;font-size:12.5px;line-height:12.5px;letter-spacing:0.46px;color:#8a8f98;font-weight:400;">Trạng thái</div>
<div class="t" style="left:1759.2px;top:253.7px;font-size:12.5px;line-height:12.5px;letter-spacing:0.54px;color:#8a8f98;font-weight:400;">Hành động</div>
<div class="t" style="left:698.8px;top:303.7px;font-size:13px;line-height:13px;letter-spacing:0.0px;color:#1f1f1f;font-weight:400;">test</div>
<div class="t" style="left:698.8px;top:358.2px;font-size:13px;line-height:13px;letter-spacing:0.18px;color:#1f1f1f;font-weight:400;">vai trò sản phẩm</div>
<div class="t" style="left:697.8px;top:412.7px;font-size:13px;line-height:13px;letter-spacing:-0.18px;color:#1f1f1f;font-weight:400;">Role Nhân viên</div>
<div class="t" style="left:698.8px;top:466.7px;font-size:13px;line-height:13px;letter-spacing:0.02px;color:#1f1f1f;font-weight:400;">test nua nek</div>
<div class="t" style="left:698.8px;top:520.7px;font-size:13px;line-height:13px;letter-spacing:-0.13px;color:#1f1f1f;font-weight:400;">fullnek</div>
<div class="t" style="left:698.8px;top:574.7px;font-size:13px;line-height:13px;letter-spacing:0.23px;color:#1f1f1f;font-weight:400;">full</div>
<div class="t" style="left:698.8px;top:631.5px;font-size:10.85px;line-height:10.85px;letter-spacing:-0.15px;color:#1f1f1f;font-weight:400;">CTV</div>
<div class="t" style="left:698.8px;top:679.4px;font-size:13px;line-height:13px;letter-spacing:0.43px;color:#1f1f1f;font-weight:400;">Admin</div>
<div class="t" style="left:890.8px;top:629.0px;font-size:13px;line-height:13px;letter-spacing:0.07px;color:#1f1f1f;font-weight:400;">Promote others products, earn commissions from sales.</div>
<div class="t" style="left:891.8px;top:679.2px;font-size:13px;line-height:13px;letter-spacing:0.16px;color:#1f1f1f;font-weight:400;">Admin is allowed to manage everything of the app.</div>
<div class="t" style="left:1422.6px;top:630.9px;font-size:11.11px;line-height:11.11px;letter-spacing:0.17px;color:#262626;font-weight:400;">5.5%</div>
<div class="t" style="left:1610.0px;top:631.4px;font-size:10.57px;line-height:10.57px;letter-spacing:-0.01px;color:#ffffff;font-weight:700;">Hoạt động</div>
<div class="t" style="left:1743.6px;top:743.7px;font-size:13px;line-height:13px;letter-spacing:0px;color:#1661f5;font-weight:700;">1</div>
<div class="t" style="left:1808.2px;top:743.5px;font-size:13px;line-height:13px;letter-spacing:0.01px;color:#262626;font-weight:400;">10 / page</div>
</body></html>
